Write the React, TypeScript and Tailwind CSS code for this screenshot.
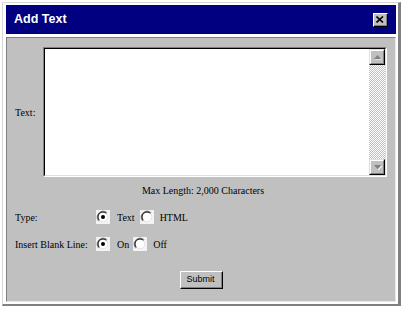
import React from 'react';

const Radio: React.FC<{ checked?: boolean }> = ({ checked }) => (
  <svg width="14" height="14" viewBox="0 0 14 14" className="block shrink-0">
    <rect width="14" height="14" fill="#f2f2f2" />
    <circle cx="7" cy="7" r="5" fill="#ffffff" />
    <path d="M2.76 11.24 A6 6 0 0 1 11.24 2.76" fill="none" stroke="#808080" strokeWidth="1" />
    <path d="M3.46 10.54 A5 5 0 0 1 10.54 3.46" fill="none" stroke="#000000" strokeWidth="1" />
    <path d="M11.24 2.76 A6 6 0 0 1 2.76 11.24" fill="none" stroke="#ffffff" strokeWidth="1" />
    <path d="M10.54 3.46 A5 5 0 0 1 3.46 10.54" fill="none" stroke="#dfdfdf" strokeWidth="1" />
    {checked && <circle cx="7" cy="7" r="2" fill="#000000" />}
  </svg>
);

const ScrollButton: React.FC<{ up?: boolean }> = ({ up }) => (
  <div className="w-[16px] h-[16px] border-t border-l border-[#dfdfdf] border-r border-b border-r-black border-b-black bg-[#c0c0c0]">
    <div className="w-full h-full border-t border-l border-white border-r border-b border-r-[#808080] border-b-[#808080] flex items-center justify-center">
      <svg width="9" height="6" viewBox="0 0 9 6" className="block">
        {up ? (
          <>
            <path d="M1 5 L8 5 L4.5 1 Z" fill="#808080" />
            <path d="M2 6 L9 6" stroke="#ffffff" strokeWidth="1" />
          </>
        ) : (
          <>
            <path d="M1 1 L8 1 L4.5 5 Z" fill="#808080" />
            <path d="M5 6 L9 2" stroke="#ffffff" strokeWidth="1" />
          </>
        )}
      </svg>
    </div>
  </div>
);

export default function App() {
  return (
    <div className="w-[401px] h-[311px] bg-white pt-[2px] pl-[2px] font-['Liberation_Serif','Times_New_Roman',serif] text-black">
      <div className="w-[399px] border-l border-t border-[#d8d8d8] border-r-[3px] border-r-[#808080] border-b-2 border-b-[#808080] bg-white pl-[3px] pr-[2px] pt-[2px] pb-[2px]">
        <div className="h-[29px] bg-[#000080] flex items-center justify-between pl-[8px] pr-[8px]">
          <span className="text-white text-[12.5px] font-bold font-['Liberation_Sans',Arial,sans-serif]">
            Add Text
          </span>
          <div className="w-[15px] h-[14px] bg-[#c0c0c0] border-t border-l border-white border-r border-b border-r-black border-b-black">
            <div className="w-full h-full border-r border-b border-[#808080] flex items-center justify-center">
              <svg width="8" height="7" viewBox="0 0 8 7" className="block">
                <path d="M0.5 0.5 L7 6.5 M7 0.5 L0.5 6.5" stroke="#000" strokeWidth="1.6" />
              </svg>
            </div>
          </div>
        </div>

        <div className="mt-[3px] h-[265px] bg-[#c0c0c0] border-t border-l border-[#808080] border-r border-b border-r-[#e8e8e8] border-b-[#e8e8e8] text-[10px] leading-[13px]">
          <div className="flex items-center pt-[9px] pl-[8px]">
            <div className="w-[28px]">Text:</div>
            <div className="w-[344px] h-[130px] border-t border-l border-[#808080] border-r border-b border-r-white border-b-white">
              <div className="w-full h-full border-t border-l border-black border-r border-b border-r-[#dfdfdf] border-b-[#dfdfdf] bg-white flex">
                <div className="flex-1" />
                <div className="w-[16px] flex flex-col">
                  <ScrollButton up />
                  <div className="flex-1 bg-[repeating-conic-gradient(#c0c0c0_0_25%,#ffffff_0_50%)] bg-[length:2px_2px]" />
                  <ScrollButton />
                </div>
              </div>
            </div>
          </div>

          <div className="text-center mt-[7px] pl-[4px]">Max Length: 2,000 Characters</div>

          <div className="flex items-center mt-[13px] pl-[8px] h-[14px]">
            <div className="w-[81px]">Type:</div>
            <Radio checked />
            <span className="ml-[7px]">Text</span>
            <span className="ml-[5px]"><Radio /></span>
            <span className="ml-[6px]">HTML</span>
          </div>

          <div className="flex items-center mt-[13px] pl-[8px] h-[14px]">
            <div className="w-[81px]">Insert Blank Line:</div>
            <Radio checked />
            <span className="ml-[7px]">On</span>
            <span className="ml-[4px]"><Radio /></span>
            <span className="ml-[6px]">Off</span>
          </div>

          <div className="flex justify-center mt-[20px]">
            <button className="w-[43px] h-[18px] bg-[#c0c0c0] border-t border-l border-white border-r border-b border-r-black border-b-black p-0 font-['Liberation_Sans',Arial,sans-serif] text-[9px] leading-none">
              <div className="w-full h-full border-r border-b border-[#808080] flex items-center justify-center">
                Submit
              </div>
            </button>
          </div>
        </div>
      </div>
    </div>
  );
}
